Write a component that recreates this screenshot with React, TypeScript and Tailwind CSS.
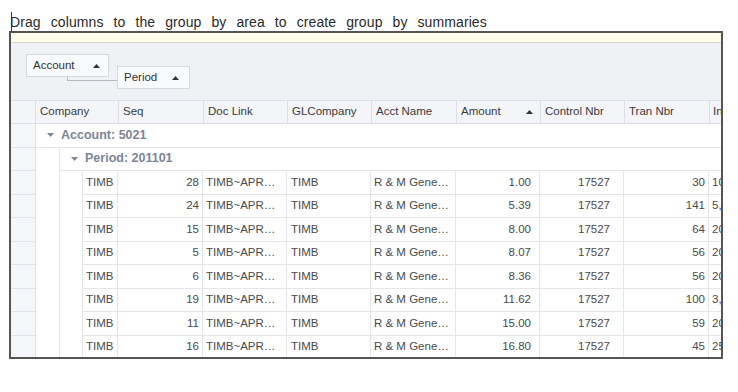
import React from "react";

const rows = [
  { seq: "28", amt: "1.00", tran: "30", inv: "10" },
  { seq: "24", amt: "5.39", tran: "141", inv: "5," },
  { seq: "15", amt: "8.00", tran: "64", inv: "20" },
  { seq: "5", amt: "8.07", tran: "56", inv: "20" },
  { seq: "6", amt: "8.36", tran: "56", inv: "20" },
  { seq: "19", amt: "11.62", tran: "100", inv: "3," },
  { seq: "11", amt: "15.00", tran: "59", inv: "20" },
  { seq: "16", amt: "16.80", tran: "45", inv: "25" },
];

const Up = () => (
  <svg width="7" height="4" viewBox="0 0 7 4" className="shrink-0">
    <path d="M0 4 L3.5 0 L7 4 Z" fill="#333" />
  </svg>
);

const Down = () => (
  <svg width="7" height="4" viewBox="0 0 7 4" className="shrink-0">
    <path d="M0 0 L7 0 L3.5 4 Z" fill="#7d8796" />
  </svg>
);

const Ind = () => (
  <div className="w-[25px] shrink-0 h-full bg-[#f4f6fa] border-r border-b border-[#dfe3ea]" />
);

export default function App() {
  return (
    <div
      className="w-[738px] h-[392px] bg-white relative overflow-hidden"
      style={{ fontFamily: '"Liberation Sans", Arial, sans-serif' }}
    >
      <div className="absolute left-[11px] top-[12px] w-px h-[20px] bg-[#333]" />
      <div className="pt-[14px] pl-[10px] h-[31px] text-[14px] leading-[16px] text-[#2a2a2a] [word-spacing:6px] tracking-[0.1px] whitespace-nowrap">
        Drag columns to the group by area to create group by summaries
      </div>
      <div className="ml-[9px] w-[714px] h-[328px] border-2 border-[#555] flex flex-col overflow-hidden">
        <div className="h-[10px] shrink-0 bg-[#fdfbe9] border-b border-[#d9d8c6]" />
        <div className="h-[57px] shrink-0 bg-[#eff1f5] relative flex items-start pl-[15px] pt-[11px] text-[11.5px] text-[#333]">
          <div className="w-[83px] h-[23px] bg-[#f9fafc] border border-[#d6d9df] flex items-center justify-between pl-[6px] pr-[8px]">
            <span>Account</span>
            <Up />
          </div>
          <div className="absolute left-[56px] top-[34px] w-[50px] h-[4px] border-l border-b border-[#b5b9c0]" />
          <div className="ml-[8px] mt-[12px] w-[73px] h-[23px] bg-[#f9fafc] border border-[#d6d9df] flex items-center justify-between pl-[6px] pr-[10px] relative">
            <span>Period</span>
            <Up />
          </div>
        </div>
        <div className="h-[24px] shrink-0 flex bg-[#f4f5f8] border-t border-b border-[#dcdfe6] text-[11.5px] text-[#3a3a3a]">
          <div className="w-[25px] shrink-0 border-r border-[#dcdfe6]" />
          {[
            ["Company", 83],
            ["Seq", 85],
            ["Doc Link", 84],
            ["GLCompany", 84],
            ["Acct Name", 85],
          ].map(([t, w]) => (
            <div
              key={t as string}
              className="shrink-0 border-r border-[#dcdfe6] flex items-center pl-[4px]"
              style={{ width: w as number }}
            >
              {t}
            </div>
          ))}
          <div className="w-[84px] shrink-0 border-r border-[#dcdfe6] flex items-center justify-between pl-[4px] pr-[7px]">
            <span>Amount</span>
            <Up />
          </div>
          <div className="w-[84px] shrink-0 border-r border-[#dcdfe6] flex items-center pl-[4px]">Control Nbr</div>
          <div className="w-[85px] shrink-0 border-r border-[#dcdfe6] flex items-center pl-[4px]">Tran Nbr</div>
          <div className="flex-1 flex items-center pl-[3px] overflow-hidden whitespace-nowrap">Inv</div>
        </div>
        <div className="h-[23.5px] shrink-0 flex">
          <Ind />
          <div className="flex-1 flex items-center border-b border-[#e3e6ec] pl-[11px] gap-[7px] text-[12.5px] font-bold text-[#7b8595]">
            <Down />
            <span>Account: 5021</span>
          </div>
        </div>
        <div className="h-[23.5px] shrink-0 flex">
          <Ind />
          <div className="w-[24px] shrink-0 border-r border-[#e3e6ec]" />
          <div className="flex-1 flex items-center border-b border-[#e3e6ec] pl-[11px] gap-[7px] text-[12.5px] font-bold text-[#7b8595]">
            <Down />
            <span>Period: 201101</span>
          </div>
        </div>
        {rows.map((r, i) => (
          <div key={i} className="h-[23.5px] shrink-0 flex text-[11.5px] text-[#4a4a4a]">
            <Ind />
            <div className="w-[24px] shrink-0 border-r border-[#e3e6ec]" />
            <div className="w-[23px] shrink-0 border-r border-[#e3e6ec]" />
            <div className="flex-1 flex border-b border-[#e3e6ec] whitespace-nowrap">
              <div className="w-[35px] shrink-0 border-r border-[#e3e6ec] flex items-center pl-[3px]">TIMB</div>
              <div className="w-[85px] shrink-0 border-r border-[#e3e6ec] flex items-center justify-end pr-[3px]">{r.seq}</div>
              <div className="w-[84px] shrink-0 border-r border-[#e3e6ec] flex items-center pl-[3px]">TIMB~APR…</div>
              <div className="w-[84px] shrink-0 border-r border-[#e3e6ec] flex items-center pl-[4px]">TIMB</div>
              <div className="w-[85px] shrink-0 border-r border-[#e3e6ec] flex items-center pl-[3px]">R &amp; M Gene…</div>
              <div className="w-[84px] shrink-0 border-r border-[#e3e6ec] flex items-center justify-end pr-[8px]">{r.amt}</div>
              <div className="w-[84px] shrink-0 border-r border-[#e3e6ec] flex items-center justify-end pr-[13px]">17527</div>
              <div className="w-[85px] shrink-0 border-r border-[#e3e6ec] flex items-center justify-end pr-[3px]">{r.tran}</div>
              <div className="flex-1 flex items-center pl-[3px] overflow-hidden">{r.inv}</div>
            </div>
          </div>
        ))}
      </div>
    </div>
  );
}
